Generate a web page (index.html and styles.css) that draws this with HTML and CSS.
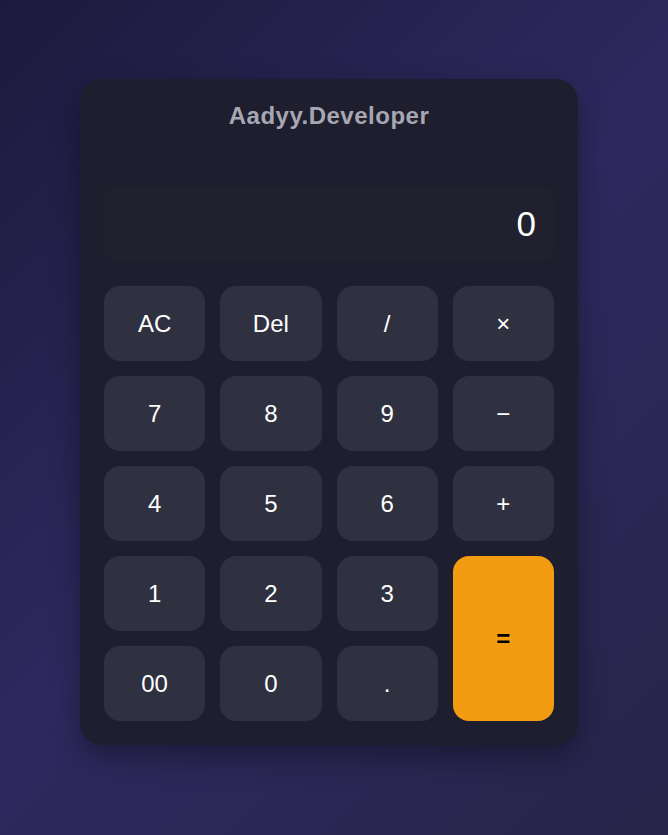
FILE: index.html
```html
<!DOCTYPE html>
<html lang="en">
<head>
<meta charset="UTF-8">
<title>Calculator</title>
<link rel="stylesheet" href="styles.css">
</head>
<body>
<div class="calculator">
  <h1 class="brand">Aadyy.Developer</h1>
  <div class="display"><span class="current">0</span></div>
  <div class="keys">
    <button class="key">AC</button>
    <button class="key">Del</button>
    <button class="key">/</button>
    <button class="key">×</button>
    <button class="key">7</button>
    <button class="key">8</button>
    <button class="key">9</button>
    <button class="key">−</button>
    <button class="key">4</button>
    <button class="key">5</button>
    <button class="key">6</button>
    <button class="key">+</button>
    <button class="key">1</button>
    <button class="key">2</button>
    <button class="key">3</button>
    <button class="key equals">=</button>
    <button class="key">00</button>
    <button class="key">0</button>
    <button class="key">.</button>
  </div>
</div>
</body>
</html>
```
FILE: styles.css
```css
* { box-sizing: border-box; }
html, body { height: 100%; }
body {
  margin: 0;
  min-height: 100vh;
  display: flex;
  align-items: center;
  justify-content: center;
  padding: 0 10px 11px 0;
  font-family: "Liberation Sans", Arial, sans-serif;
  background: linear-gradient(135deg, #1d1a3d 0%, #2e295f 50%, #272449 100%);
}
.calculator {
  width: 498px;
  padding: 24px;
  background: #1e1e2f;
  border-radius: 22px;
  box-shadow: 0 12px 30px rgba(0, 0, 0, 0.35);
}
.brand {
  margin: -1px 0 0;
  text-align: center;
  font-size: 24px;
  font-weight: bold;
  letter-spacing: 0.5px;
  color: #a7a7b2;
  line-height: 27px;
}
.display {
  margin-top: 57px;
  height: 75px;
  background: #21202e;
  border-radius: 12px;
  display: flex;
  align-items: center;
  justify-content: flex-end;
  padding: 0 18px;
  color: #ffffff;
  font-size: 35px;
}
.keys {
  margin-top: 25px;
  display: grid;
  grid-template-columns: repeat(4, 1fr);
  grid-auto-rows: 75px;
  gap: 15px;
}
.key {
  border: none;
  border-radius: 16px;
  background: #2f3040;
  color: #ffffff;
  font-family: "Liberation Sans", Arial, sans-serif;
  font-size: 24px;
  padding: 0;
}
.equals {
  grid-column: 4;
  grid-row: 4 / span 2;
  background: #f39c12;
  color: #000000;
  font-weight: bold;
}
```
